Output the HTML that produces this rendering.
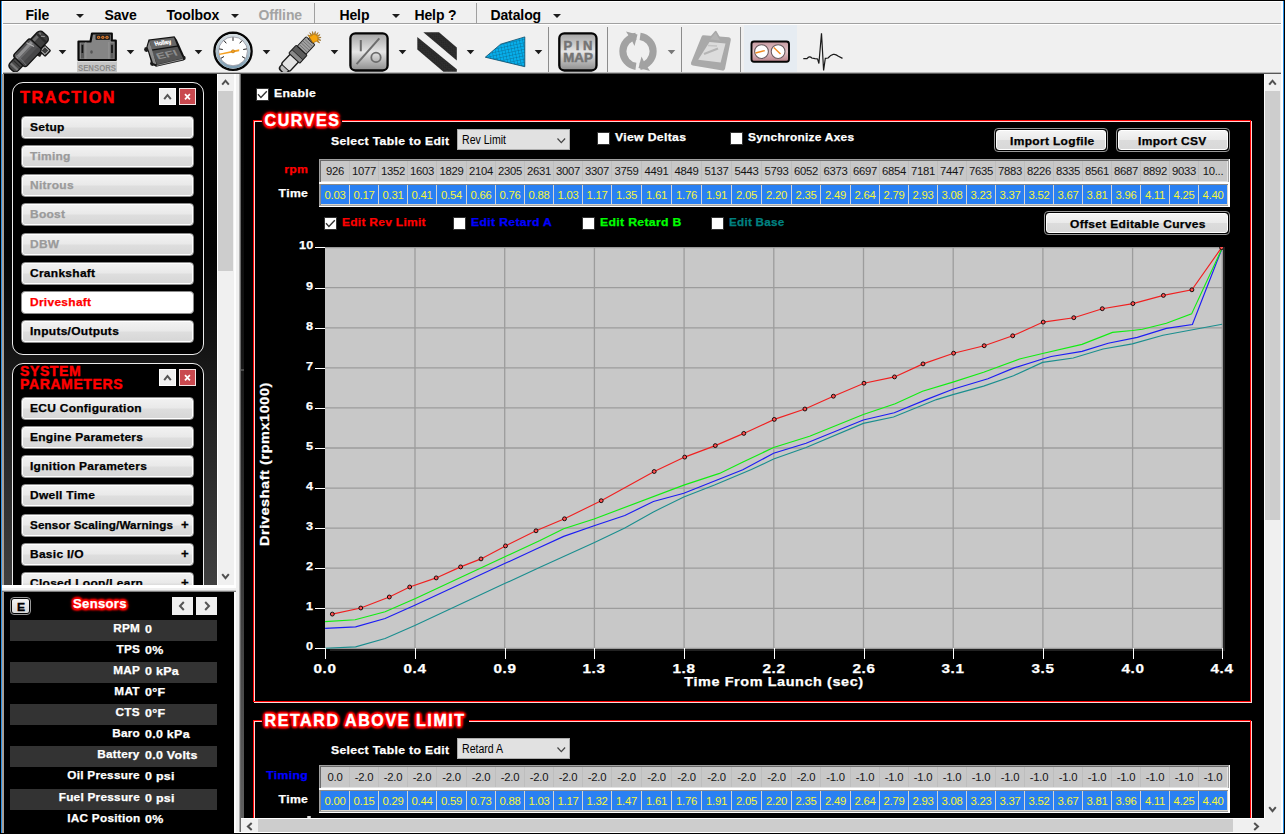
<!DOCTYPE html><html><head><meta charset="utf-8"><title>EFI</title><style>
*{box-sizing:border-box;margin:0;padding:0}
html,body{width:1285px;height:834px;overflow:hidden;background:#f0f0f0;font-family:"Liberation Sans",sans-serif;}
.a{position:absolute}
.b{font-weight:bold}
.t{position:absolute;white-space:nowrap;font-weight:bold;transform-origin:0 0;line-height:1;-webkit-text-stroke:0.25px currentColor}
.tri{position:absolute;width:0;height:0;border-left:4px solid transparent;border-right:4px solid transparent;border-top:4px solid #1c1c1c}
.btn{position:absolute;left:21px;width:173px;height:23px;border-radius:4px;border:1px solid #8c8c8c;box-shadow:inset 0 0 0 1px #fff;background:linear-gradient(#f2f2f2 0%,#e9e9e9 48%,#dedede 52%,#d6d6d6 100%)}
.btn.on{background:#fff}
.sq{position:absolute;width:17px;height:17px}
.glow{text-shadow:0 0 1px #f00,0 0 2px #f00,0 0 2px #f00,0 0 3px #f00,0 0 3px #f00,0 0 4px #f00,0 0 5px #f00,1.5px 1.5px 2px #f00,-1.5px -1.5px 2px #f00,1.5px -1.5px 2px #f00,-1.5px 1.5px 2px #f00,2px 0 2px #f00,-2px 0 2px #f00,0 2px 2px #f00,0 -2px 2px #f00}
.cb{position:absolute;width:13px;height:13px;background:#fff;border:1px solid #333}
.cell{position:absolute;top:0;height:100%;text-align:center;font-size:11.3px;white-space:nowrap;letter-spacing:-0.25px}
.pbtn{position:absolute;height:24px;border-radius:4px;border:1px solid #9a9a9a;background:#000;padding:1px}
.pbtn>div{width:100%;height:100%;border-radius:3px;border:1px solid #fff;background:linear-gradient(#f4f4f4 0%,#eaeaea 48%,#dcdcdc 52%,#d8d8d8 100%)}
.dd{position:absolute;height:21px;width:113px;background:#e1e1e1;border:1px solid #adadad}
.srow{position:absolute;left:10px;width:207px;height:21px;background:#333}
</style></head><body>
<div class="a" style="left:0px;top:0px;width:1285px;height:24px;background:#f0f0f0;"></div>
<div class="a" style="left:0px;top:23px;width:1285px;height:1px;background:#a0a0a0;"></div>
<div class="a" style="left:0px;top:24px;width:1285px;height:1px;background:#fff;"></div>
<div class="t " style="left:25.4px;top:8px;font-size:14px;color:#000;letter-spacing:-0.1px;transform:scaleX(1.0);-webkit-text-stroke:0">File</div>
<div class="t " style="left:104.4px;top:8px;font-size:14px;color:#000;letter-spacing:-0.1px;transform:scaleX(1.0);-webkit-text-stroke:0">Save</div>
<div class="t " style="left:166.4px;top:8px;font-size:14px;color:#000;letter-spacing:-0.1px;transform:scaleX(1.0);-webkit-text-stroke:0">Toolbox</div>
<div class="t " style="left:258.4px;top:8px;font-size:14px;color:#a3a3a3;letter-spacing:-0.1px;transform:scaleX(1.0);-webkit-text-stroke:0">Offline</div>
<div class="t " style="left:339.4px;top:8px;font-size:14px;color:#000;letter-spacing:-0.1px;transform:scaleX(1.0);-webkit-text-stroke:0">Help</div>
<div class="t " style="left:414.4px;top:8px;font-size:14px;color:#000;letter-spacing:-0.1px;transform:scaleX(1.0);-webkit-text-stroke:0">Help ?</div>
<div class="t " style="left:490.4px;top:8px;font-size:14px;color:#000;letter-spacing:-0.1px;transform:scaleX(1.0);-webkit-text-stroke:0">Datalog</div>
<div class="tri" style="left:75.5px;top:14px"></div>
<div class="tri" style="left:230.5px;top:14px"></div>
<div class="tri" style="left:391.5px;top:14px"></div>
<div class="tri" style="left:552.5px;top:14px"></div>
<div class="a" style="left:314px;top:3px;width:1px;height:20px;background:#a0a0a0;"></div>
<div class="a" style="left:476px;top:3px;width:1px;height:20px;background:#a0a0a0;"></div>
<div class="a" style="left:0px;top:25px;width:1285px;height:47px;background:#f0f0f0;"></div>
<svg class="a" style="left:0;top:24px" width="1285" height="49" viewBox="0 24 1285 49">
<defs>
<linearGradient id="gio" x1="0" y1="0" x2="0" y2="1"><stop offset="0" stop-color="#a4a4a4"/><stop offset="0.5" stop-color="#e6e6e6"/><stop offset="0.62" stop-color="#cfcfcf"/><stop offset="1" stop-color="#8c8c8c"/></linearGradient>
<linearGradient id="ginj" x1="0" y1="0" x2="1" y2="1"><stop offset="0" stop-color="#8a8a8a"/><stop offset="0.35" stop-color="#5a5a5a"/><stop offset="1" stop-color="#333"/></linearGradient>
<linearGradient id="gpk" x1="0" y1="0" x2="0" y2="1"><stop offset="0" stop-color="#c79aa0"/><stop offset="0.5" stop-color="#e2c4c8"/><stop offset="1" stop-color="#b88088"/></linearGradient>
<pattern id="grid" width="3.2" height="3.2" patternUnits="userSpaceOnUse" patternTransform="rotate(-12)"><rect width="3.2" height="3.2" fill="#07aeea"/><path d="M0 0H3.2M0 0V3.2" stroke="#0a5f86" stroke-width="0.7"/></pattern>
<linearGradient id="gring" x1="0" y1="0" x2="0" y2="1"><stop offset="0" stop-color="#d4dde2"/><stop offset="0.45" stop-color="#b4c6d0"/><stop offset="1" stop-color="#7f9fb4"/></linearGradient>
<pattern id="tex" width="3" height="3" patternUnits="userSpaceOnUse" patternTransform="rotate(40)"><rect width="3" height="3" fill="#262626"/><rect x="0.5" y="0.5" width="1" height="1" fill="#4a4a4a"/><rect x="2" y="1.8" width="0.8" height="0.8" fill="#3c3c3c"/></pattern>
</defs>
<path d="M58.7 50 H66.3 L62.5 54.2 Z" fill="#1c1c1c"/>
<path d="M126.7 50 H134.3 L130.5 54.2 Z" fill="#1c1c1c"/>
<path d="M194.7 50 H202.3 L198.5 54.2 Z" fill="#1c1c1c"/>
<path d="M262.7 50 H270.3 L266.5 54.2 Z" fill="#1c1c1c"/>
<path d="M330.7 50 H338.3 L334.5 54.2 Z" fill="#1c1c1c"/>
<path d="M398.7 50 H406.3 L402.5 54.2 Z" fill="#1c1c1c"/>
<path d="M466.7 50 H474.3 L470.5 54.2 Z" fill="#1c1c1c"/>
<path d="M534.7 50 H542.3 L538.5 54.2 Z" fill="#1c1c1c"/>
<path d="M667.7 50 H675.3 L671.5 54.2 Z" fill="#787878"/>
<line x1="548.5" y1="27" x2="548.5" y2="72" stroke="#8c8c8c" stroke-width="1"/>
<line x1="607.5" y1="27" x2="607.5" y2="72" stroke="#8c8c8c" stroke-width="1"/>
<line x1="681.5" y1="27" x2="681.5" y2="72" stroke="#8c8c8c" stroke-width="1"/>
<line x1="740.5" y1="27" x2="740.5" y2="72" stroke="#8c8c8c" stroke-width="1"/>
<g transform="translate(27.2,53.0) rotate(-46.5)">
<rect x="-23" y="-5.6" width="14" height="11.2" rx="4" fill="#4a4a4a" stroke="#141414" stroke-width="1.4"/>
<rect x="-20" y="-4.8" width="2.2" height="9.6" fill="#7a7a7a"/><rect x="-15.5" y="-4.8" width="1.2" height="9.6" fill="#2c2c2c"/>
<rect x="9" y="-6.9" width="17" height="13.8" rx="4.4" fill="#3e3e3e" stroke="#141414" stroke-width="1.4"/>
<rect x="11" y="-5.5" width="13" height="3" rx="1.5" fill="#6c6c6c"/>
<rect x="19.5" y="-6" width="2.4" height="12" fill="#2a2a2a"/>
<path d="M21.5 -1.5 L24 1.5" stroke="#9a9a9a" stroke-width="1"/>
<path d="M4 6 L11 6 L11 11 L6 12 Z" fill="#1e1c1c"/>
<rect x="9.4" y="6.8" width="9" height="9" rx="1.2" fill="#141414"/>
<rect x="11.2" y="8.4" width="5.6" height="5.6" fill="#3c3c3c" stroke="#e8e8e8" stroke-width="0.9"/>
<rect x="-12" y="-8.6" width="24.5" height="17.2" rx="3" fill="#525254" stroke="#141414" stroke-width="1.4"/>
<rect x="-11" y="-5.8" width="22" height="3.4" fill="#8e8e90"/>
<rect x="-11" y="-2.4" width="22" height="1.6" fill="#6a6a6c"/>
<rect x="-11.2" y="3.5" width="23" height="4.4" rx="1.5" fill="#454547"/>
<path d="M7 -7.6 L9.5 0.5" stroke="#b4b4b4" stroke-width="1"/>
<path d="M-9.5 -7.5 Q-8 0 -9.5 7.5" stroke="#77777a" stroke-width="0.9" fill="none"/>
</g>
<rect x="77" y="61.5" width="40" height="10.5" fill="#c6c6c6"/>
<text x="97" y="71" font-family="Liberation Sans" font-weight="bold" font-size="9.5" fill="#8a8a8a" text-anchor="middle" textLength="38" lengthAdjust="spacingAndGlyphs">SENSORS</text>
<path d="M78.5 41.5 H90.5 L92 33.5 H111.8 V40.5 H115.8 V60 H78.5 Z" fill="#858585" stroke="#0a0a0a" stroke-width="2.2" stroke-linejoin="round"/>
<rect x="95.5" y="34.5" width="14.5" height="5.5" rx="1" fill="#222"/>
<circle cx="98.6" cy="37.3" r="1.6" fill="#e07a2a"/><circle cx="98.6" cy="37.3" r="0.6" fill="#333"/>
<circle cx="102.8" cy="37.3" r="1.6" fill="#e07a2a"/><circle cx="102.8" cy="37.3" r="0.6" fill="#333"/>
<circle cx="107" cy="37.3" r="1.6" fill="#e07a2a"/><circle cx="107" cy="37.3" r="0.6" fill="#333"/>
<rect x="81" y="43.5" width="3" height="15" fill="#5a5a5a"/><rect x="81.6" y="45" width="1.6" height="8" fill="#111"/>
<rect x="110.5" y="43.5" width="3" height="15" fill="#5a5a5a"/><rect x="111.2" y="45" width="1.6" height="8" fill="#111"/>
<rect x="85.5" y="42" width="0.8" height="17" fill="#9a9a9a"/><rect x="108.5" y="42" width="0.8" height="17" fill="#9a9a9a"/>
<ellipse cx="91.5" cy="52" rx="1.3" ry="1.7" fill="#555"/>
<path d="M146.5 46.5 L148.5 39.5 L174.5 36.3 L177 40 L184.8 57.5 L183.5 60.5 L156 66.8 L151.5 64 Z" fill="#111"/>
<circle cx="146.5" cy="49.5" r="2.4" fill="#1a1a1a"/><circle cx="152.5" cy="63.5" r="2.4" fill="#1a1a1a"/><circle cx="183.5" cy="58" r="2.2" fill="#1a1a1a"/>
<path d="M149.5 40.5 L174 37.5 L177 45.5 L151.5 49.5 Z" fill="#666"/>
<path d="M151.8 50.8 L177.5 46.8 L183 58.2 L157 64.5 Z" fill="#555"/>
<path d="M147.5 47 L149.3 41 L156.5 64.5 L153 63 Z" fill="#8c8c8c"/>
<path d="M157 64.8 L183 58.6 L183 59.8 L156.5 66 Z" fill="#8a8a8a"/>
<text transform="translate(155.5,45.8) rotate(-8) skewX(14)" font-family="Liberation Sans" font-weight="bold" font-size="6" fill="#fff" stroke="#fff" stroke-width="0.3" textLength="16.5" lengthAdjust="spacingAndGlyphs">Holley</text>
<text transform="translate(158,59.6) rotate(-12) skewX(16)" font-family="Liberation Sans" font-weight="bold" font-size="9" fill="#8e8e8e" textLength="21" lengthAdjust="spacingAndGlyphs">EFI</text>
<circle cx="233" cy="51.3" r="18.6" fill="#fff" stroke="#050505" stroke-width="2.4"/>
<circle cx="233" cy="51.3" r="15.9" fill="none" stroke="url(#gring)" stroke-width="2.6"/>
<circle cx="233" cy="51.3" r="14.4" fill="none" stroke="#556" stroke-width="0.5"/>
<line x1="224.0" y1="56.5" x2="220.9" y2="58.3" stroke="#222" stroke-width="1"/>
<line x1="222.8" y1="49.5" x2="219.2" y2="48.9" stroke="#222" stroke-width="1"/>
<line x1="226.3" y1="43.3" x2="224.0" y2="40.6" stroke="#222" stroke-width="1"/>
<line x1="233.0" y1="40.9" x2="233.0" y2="37.3" stroke="#222" stroke-width="1"/>
<line x1="239.7" y1="43.3" x2="242.0" y2="40.6" stroke="#222" stroke-width="1"/>
<line x1="243.2" y1="49.5" x2="246.8" y2="48.9" stroke="#222" stroke-width="1"/>
<line x1="242.0" y1="56.5" x2="245.1" y2="58.3" stroke="#222" stroke-width="1"/>
<path d="M219 53.8 L239.2 49.2 L239.2 51.2 L219.4 55 Z" fill="#f5a020"/>
<circle cx="233" cy="51.3" r="1.6" fill="#f5a020" stroke="#a86a10" stroke-width="0.5"/>
<g transform="translate(300,52) rotate(-47)">
<rect x="-27.5" y="-5.4" width="14" height="10.8" rx="3.8" fill="#1c1c1c"/>
<rect x="-26" y="-4" width="12" height="8" rx="3" fill="#bdbdbd"/>
<rect x="-22" y="-6.4" width="15" height="12.8" rx="2" fill="#1c1c1c"/>
<rect x="-21" y="-5" width="13.5" height="10" rx="1.5" fill="#e4e4e4"/>
<rect x="-9" y="-8" width="12" height="16" rx="1.5" fill="#1a1a1a"/>
<rect x="-8" y="-7" width="4" height="14" fill="#8a8a8a"/><rect x="-3.5" y="-7" width="5.5" height="14" fill="#5c5c5c"/>
<rect x="2" y="-6.5" width="14" height="13" rx="1.5" fill="#1a1a1a"/>
<rect x="3" y="-5.5" width="12" height="11" fill="#a0a0a0"/>
<path d="M5 -5.5V5.5M7.5 -5.5V5.5M10 -5.5V5.5M12.5 -5.5V5.5" stroke="#6a6a6a" stroke-width="0.8"/>
<rect x="15" y="-3" width="5" height="6" fill="#666" stroke="#222" stroke-width="0.8"/>
</g>
<polygon points="307.8,34.9 311.3,36.1 309.7,32.7 312.5,35.2 312.4,31.5 313.9,34.9 315.3,31.4 315.4,35.2 318.0,32.5 316.6,36.0 320.1,34.6 317.4,37.2 321.1,37.4 317.6,38.7 321.0,40.3 317.2,40.1 319.7,43.0 316.3,41.3 313.0,43.0" fill="#f6a60e" stroke="#7a4a00" stroke-width="0.5"/>
<rect x="350.4" y="33.3" width="37.2" height="37.2" rx="5" fill="url(#gio)" stroke="#050505" stroke-width="2.3"/>
<line x1="360.8" y1="40" x2="360.8" y2="51.3" stroke="#6c6c6c" stroke-width="2"/>
<line x1="379.3" y1="38.4" x2="356.6" y2="64.2" stroke="#6c6c6c" stroke-width="2"/>
<circle cx="376" cy="57.4" r="4.7" fill="none" stroke="#6c6c6c" stroke-width="1.8"/>
<polygon points="423.3,32.2 439,32.2 456.8,47.4 456.8,60.5" fill="url(#tex)"/>
<polygon points="417.3,36.9 456.8,69.2 456.8,71.8 443.4,71.8 417.3,49.6" fill="url(#tex)"/>
<polygon points="485.3,57.2 500.6,44.2 524.8,36.9 524.8,66.7" fill="url(#grid)" stroke="#0a4a68" stroke-width="0.8"/>
<rect x="559.3" y="33.3" width="37.2" height="37.2" rx="5" fill="url(#gio)" stroke="#050505" stroke-width="2.3"/>
<text x="578" y="50.2" font-family="Liberation Sans" font-weight="bold" font-size="13" fill="#747474" stroke="#747474" stroke-width="0.5" text-anchor="middle" textLength="29" lengthAdjust="spacing">PIN</text>
<text x="578" y="61.7" font-family="Liberation Sans" font-weight="bold" font-size="12.5" fill="#747474" stroke="#747474" stroke-width="0.5" text-anchor="middle" textLength="29.5" lengthAdjust="spacingAndGlyphs">MAP</text>
<path d="M640.6 32.7 A18.8 18.8 0 0 1 640.6 69.9 L639.6 62.7 A11.5 11.5 0 0 0 639.6 39.9 Z" fill="#a2a2a2"/>
<path d="M635.4 69.9 A18.8 18.8 0 0 1 635.4 32.7 L636.4 39.9 A11.5 11.5 0 0 0 636.4 62.7 Z" fill="#a2a2a2"/>
<path d="M626 31.5 L637.5 34.5 L634.5 46 L631.8 40.5 Z" fill="#a2a2a2"/>
<path d="M650 71 L638.5 68 L641.5 56.5 L644.2 62 Z" fill="#a2a2a2"/>
<polygon points="703.6,37.6 728.6,39.6 722.8,68.4 693.2,63.4" fill="#a9a9a9" stroke="#a9a9a9" stroke-width="4.5" stroke-linejoin="round"/>
<polygon points="709.5,42 725.5,43.6 720.6,62.5 698.2,59.7" fill="#dcdcdc"/>
<polygon points="715.7,31.5 721.5,41.5 708.5,40" fill="#b4b4b4" stroke="#a9a9a9" stroke-width="1.5" stroke-linejoin="round"/>
<path d="M704 54 L718 48.5" stroke="#b5b5b5" stroke-width="2"/><path d="M708 45.5 L717 46" stroke="#c4c4c4" stroke-width="1.5"/>
<rect x="744" y="25" width="53" height="47" fill="#e6ecf2"/>
<rect x="751.5" y="41.5" width="37.5" height="20.3" rx="2.5" fill="url(#gpk)" stroke="#050505" stroke-width="1.9"/>
<circle cx="761.5" cy="51.6" r="6.9" fill="#fff" stroke="#6a5a5e" stroke-width="1.1"/>
<circle cx="778.1" cy="51.6" r="6.9" fill="#fff" stroke="#6a5a5e" stroke-width="1.1"/>
<path d="M755.5 53 L764.8 50.6" stroke="#f08a20" stroke-width="1.4"/>
<path d="M773.8 47.6 L780.5 54" stroke="#f08a20" stroke-width="1.4"/>
<path d="M803.3 58.6 L807 58.6 Q809.5 55.4 811.8 58 L815 58.6 L817.6 59 L818.9 63.5 L821.5 33.2 L823.6 70.5 L825.3 58.3 L828 58 Q833.5 51.8 838 56 L842.5 58.4" fill="none" stroke="#1a1a1a" stroke-width="1.2" stroke-linejoin="miter"/>
</svg>
<div class="a" style="left:2px;top:72px;width:1280px;height:1px;background:#b8b8b8;"></div>
<div class="a" style="left:2px;top:73px;width:1280px;height:1px;background:#585858;"></div>
<div class="a" style="left:4px;top:74px;width:213px;height:511px;background:linear-gradient(#000 0%,#030303 35%,#404040 100%);"></div>
<div class="a" style="left:2px;top:74px;width:2px;height:760px;background:#a8a098;"></div>
<div class="a" style="left:12px;top:82px;width:192px;height:273px;border:1px solid #ececec;border-radius:11px;background:#000"></div>
<div class="t " style="left:20px;top:89px;font-size:16.2px;color:#f00;letter-spacing:1.55px;transform:scaleX(1.0);-webkit-text-stroke:0.5px #f00">TRACTION</div>
<div class="sq" style="left:159px;top:88px;background:#f0f0f0;border:1px solid #fff"><svg class="a" style="left:-1px;top:-1px" width="17" height="17"><path d="M5.2 11.2 L8.5 7 L11.8 11.2" fill="none" stroke="#555" stroke-width="2"/></svg></div>
<div class="sq" style="left:179px;top:88px;background:#c9494f;border:1px solid #f4e4e4"><svg class="a" style="left:-1px;top:-1px" width="17" height="17"><path d="M6 6.2 L10.9 11.4 M10.9 6.2 L6 11.4" fill="none" stroke="#fff" stroke-width="1.7"/></svg></div>
<div class="btn " style="top:116px"></div>
<div class="t " style="left:30px;top:122px;font-size:10.6px;color:#000;letter-spacing:0.25px;transform:scaleX(1.13);">Setup</div>
<div class="btn " style="top:145px"></div>
<div class="t " style="left:30px;top:151px;font-size:10.6px;color:#9a9a9a;letter-spacing:0.25px;transform:scaleX(1.13);">Timing</div>
<div class="btn " style="top:174px"></div>
<div class="t " style="left:30px;top:180px;font-size:10.6px;color:#9a9a9a;letter-spacing:0.25px;transform:scaleX(1.13);">Nitrous</div>
<div class="btn " style="top:203px"></div>
<div class="t " style="left:30px;top:209px;font-size:10.6px;color:#9a9a9a;letter-spacing:0.25px;transform:scaleX(1.13);">Boost</div>
<div class="btn " style="top:233px"></div>
<div class="t " style="left:30px;top:239px;font-size:10.6px;color:#9a9a9a;letter-spacing:0.25px;transform:scaleX(1.13);">DBW</div>
<div class="btn " style="top:262px"></div>
<div class="t " style="left:30px;top:268px;font-size:10.6px;color:#000;letter-spacing:0.25px;transform:scaleX(1.13);">Crankshaft</div>
<div class="btn on" style="top:291px"></div>
<div class="t " style="left:30px;top:297px;font-size:10.6px;color:#f00;letter-spacing:0.25px;transform:scaleX(1.13);">Driveshaft</div>
<div class="btn " style="top:320px"></div>
<div class="t " style="left:30px;top:326px;font-size:10.6px;color:#000;letter-spacing:0.25px;transform:scaleX(1.13);">Inputs/Outputs</div>
<div class="a" style="left:12px;top:363px;width:192px;height:240px;border:1px solid #ececec;border-radius:11px;background:#000"></div>
<div class="t " style="left:20px;top:363.5px;font-size:14px;color:#f00;letter-spacing:0.62px;transform:scaleX(1.0);-webkit-text-stroke:0.45px #f00">SYSTEM</div>
<div class="t " style="left:20px;top:377px;font-size:14px;color:#f00;letter-spacing:0.62px;transform:scaleX(1.0);-webkit-text-stroke:0.45px #f00">PARAMETERS</div>
<div class="sq" style="left:159px;top:369px;background:#f0f0f0;border:1px solid #fff"><svg class="a" style="left:-1px;top:-1px" width="17" height="17"><path d="M5.2 11.2 L8.5 7 L11.8 11.2" fill="none" stroke="#555" stroke-width="2"/></svg></div>
<div class="sq" style="left:179px;top:369px;background:#c9494f;border:1px solid #f4e4e4"><svg class="a" style="left:-1px;top:-1px" width="17" height="17"><path d="M6 6.2 L10.9 11.4 M10.9 6.2 L6 11.4" fill="none" stroke="#fff" stroke-width="1.7"/></svg></div>
<div class="btn" style="top:397px"></div>
<div class="t " style="left:30px;top:403px;font-size:10.6px;color:#000;letter-spacing:0.25px;transform:scaleX(1.13);">ECU Configuration</div>
<div class="btn" style="top:426px"></div>
<div class="t " style="left:30px;top:432px;font-size:10.6px;color:#000;letter-spacing:0.25px;transform:scaleX(1.13);">Engine Parameters</div>
<div class="btn" style="top:455px"></div>
<div class="t " style="left:30px;top:461px;font-size:10.6px;color:#000;letter-spacing:0.25px;transform:scaleX(1.13);">Ignition Parameters</div>
<div class="btn" style="top:484px"></div>
<div class="t " style="left:30px;top:490px;font-size:10.6px;color:#000;letter-spacing:0.25px;transform:scaleX(1.13);">Dwell Time</div>
<div class="btn" style="top:514px"></div>
<div class="t " style="left:30px;top:520px;font-size:10.6px;color:#000;letter-spacing:0.12px;transform:scaleX(1.1);">Sensor Scaling/Warnings</div>
<div class="t " style="left:181px;top:519px;font-size:12px;color:#000;letter-spacing:0px;transform:scaleX(1.1);">+</div>
<div class="btn" style="top:543px"></div>
<div class="t " style="left:30px;top:549px;font-size:10.6px;color:#000;letter-spacing:0.25px;transform:scaleX(1.13);">Basic I/O</div>
<div class="t " style="left:181px;top:548px;font-size:12px;color:#000;letter-spacing:0px;transform:scaleX(1.1);">+</div>
<div class="btn" style="top:572px"></div>
<div class="t " style="left:30px;top:578px;font-size:10.6px;color:#000;letter-spacing:0.25px;transform:scaleX(1.13);">Closed Loop/Learn</div>
<div class="t " style="left:181px;top:577px;font-size:12px;color:#000;letter-spacing:0px;transform:scaleX(1.1);">+</div>
<div class="a" style="left:217px;top:74px;width:1px;height:511px;background:#fff;"></div>
<div class="a" style="left:218px;top:74px;width:16px;height:511px;background:#f0f0f0;"></div>
<div class="a" style="left:218px;top:91px;width:15px;height:180px;background:#cdcdcd;"></div>
<svg class="a" style="left:217px;top:74px" width="17" height="17"><path d="M5.2 10.7 L8.5 6.7 L11.8 10.7" fill="none" stroke="#505050" stroke-width="2"/></svg>
<svg class="a" style="left:217px;top:568px" width="17" height="17"><path d="M5.2 6.2 L8.5 10.2 L11.8 6.2" fill="none" stroke="#505050" stroke-width="2"/></svg>
<div class="a" style="left:234px;top:74px;width:2px;height:760px;background:#fdfdfd;"></div>
<div class="a" style="left:236px;top:74px;width:3px;height:760px;background:#f0f0f0;"></div>
<div class="a" style="left:239px;top:74px;width:1px;height:760px;background:#b0b0b0;"></div>
<div class="a" style="left:240px;top:74px;width:1px;height:760px;background:#6a6a6a;"></div>
<div class="a" style="left:241px;top:74px;width:3px;height:744px;background:linear-gradient(#000 0%,#161616 38%,#606060 100%);"></div>
<div class="a" style="left:241px;top:369px;width:3px;height:2px;background:#4a4a4a;"></div>
<div class="a" style="left:2px;top:585px;width:234px;height:7px;background:linear-gradient(#fff 0,#fff 3px,#f0f0f0 3px,#f0f0f0 5px,#a8a8a8 6px,#505050 7px);"></div>
<div class="a" style="left:4px;top:592px;width:230px;height:242px;background:#000;"></div>
<div class="a" style="left:10px;top:597px;width:21px;height:18px;border:1px solid #999;border-radius:4px;background:#000"></div>
<div class="a" style="left:12px;top:599px;width:17px;height:14px;border-radius:2px;background:linear-gradient(#f4f4f4,#d8d8d8)"></div>
<div class="t " style="left:16.5px;top:602px;font-size:10.6px;color:#000;letter-spacing:0px;transform:scaleX(1.15);-webkit-text-stroke:0.3px #000">E</div>
<div class="t glow" style="left:73px;top:598px;font-size:12.6px;color:#fff;letter-spacing:0.3px;transform:scaleX(1.04);">Sensors</div>
<div class="a" style="left:172px;top:597px;width:21px;height:18px;background:#f0f0f0"><svg width="21" height="18"><path d="M11.8 5 L8 9 L11.8 13" fill="none" stroke="#555" stroke-width="2"/></svg></div>
<div class="a" style="left:196px;top:597px;width:21px;height:18px;background:#f0f0f0"><svg width="21" height="18"><path d="M9.2 5 L13 9 L9.2 13" fill="none" stroke="#555" stroke-width="2"/></svg></div>
<div class="srow" style="top:620px"></div>
<div class="t " style="right:1145px;top:623px;font-size:11px;color:#fff;letter-spacing:0.25px;transform-origin:100% 0;transform:scaleX(1.07);">RPM</div>
<div class="t " style="left:145px;top:624px;font-size:11px;color:#fff;letter-spacing:0.25px;transform:scaleX(1.13);">0</div>
<div class="t " style="right:1145px;top:644px;font-size:11px;color:#fff;letter-spacing:0.25px;transform-origin:100% 0;transform:scaleX(1.07);">TPS</div>
<div class="t " style="left:145px;top:645px;font-size:11px;color:#fff;letter-spacing:0.25px;transform:scaleX(1.13);">0%</div>
<div class="srow" style="top:662px"></div>
<div class="t " style="right:1145px;top:665px;font-size:11px;color:#fff;letter-spacing:0.25px;transform-origin:100% 0;transform:scaleX(1.07);">MAP</div>
<div class="t " style="left:145px;top:666px;font-size:11px;color:#fff;letter-spacing:0.25px;transform:scaleX(1.13);">0 kPa</div>
<div class="t " style="right:1145px;top:686px;font-size:11px;color:#fff;letter-spacing:0.25px;transform-origin:100% 0;transform:scaleX(1.07);">MAT</div>
<div class="t " style="left:145px;top:687px;font-size:11px;color:#fff;letter-spacing:0.25px;transform:scaleX(1.13);">0&deg;F</div>
<div class="srow" style="top:704px"></div>
<div class="t " style="right:1145px;top:707px;font-size:11px;color:#fff;letter-spacing:0.25px;transform-origin:100% 0;transform:scaleX(1.07);">CTS</div>
<div class="t " style="left:145px;top:708px;font-size:11px;color:#fff;letter-spacing:0.25px;transform:scaleX(1.13);">0&deg;F</div>
<div class="t " style="right:1145px;top:728px;font-size:11px;color:#fff;letter-spacing:0.25px;transform-origin:100% 0;transform:scaleX(1.07);">Baro</div>
<div class="t " style="left:145px;top:729px;font-size:11px;color:#fff;letter-spacing:0.25px;transform:scaleX(1.13);">0.0 kPa</div>
<div class="srow" style="top:746px"></div>
<div class="t " style="right:1145px;top:749px;font-size:11px;color:#fff;letter-spacing:0.25px;transform-origin:100% 0;transform:scaleX(1.07);">Battery</div>
<div class="t " style="left:145px;top:750px;font-size:11px;color:#fff;letter-spacing:0.25px;transform:scaleX(1.13);">0.0 Volts</div>
<div class="t " style="right:1145px;top:770px;font-size:11px;color:#fff;letter-spacing:0.25px;transform-origin:100% 0;transform:scaleX(1.07);">Oil Pressure</div>
<div class="t " style="left:145px;top:771px;font-size:11px;color:#fff;letter-spacing:0.25px;transform:scaleX(1.13);">0 psi</div>
<div class="srow" style="top:789px"></div>
<div class="t " style="right:1145px;top:792px;font-size:11px;color:#fff;letter-spacing:0.25px;transform-origin:100% 0;transform:scaleX(1.07);">Fuel Pressure</div>
<div class="t " style="left:145px;top:793px;font-size:11px;color:#fff;letter-spacing:0.25px;transform:scaleX(1.13);">0 psi</div>
<div class="t " style="right:1145px;top:813px;font-size:11px;color:#fff;letter-spacing:0.25px;transform-origin:100% 0;transform:scaleX(1.07);">IAC Position</div>
<div class="t " style="left:145px;top:814px;font-size:11px;color:#fff;letter-spacing:0.25px;transform:scaleX(1.13);">0%</div>
<div class="a" style="left:244px;top:74px;width:1020px;height:744px;background:#000;overflow:hidden" id="main">
<div class="cb" style="left:12px;top:14px"><svg class="a" style="left:0;top:0" width="11" height="11"><path d="M1.0 5.3 L3.9 8.4 L9.8 2.2" fill="none" stroke="#333" stroke-width="1.35"/></svg></div>
<div class="t " style="left:30px;top:13.700000000000003px;font-size:10.8px;color:#fff;letter-spacing:0.3px;transform:scaleX(1.13);">Enable</div>
<div class="a" style="left:10px;top:47px;width:998px;height:582px;border:1px solid #ffd6d6"></div>
<div class="a" style="left:9px;top:46px;width:998px;height:582px;border:1px solid #f00"></div>
<div class="a" style="left:18px;top:45px;width:80px;height:4px;background:#000;"></div>
<div class="t glow" style="left:20.5px;top:38.5px;font-size:16px;color:#fff;letter-spacing:1.6px;transform:scaleX(1.0);-webkit-text-stroke:0.4px #fff">CURVES</div>
<div class="t " style="left:87px;top:62px;font-size:10.8px;color:#fff;letter-spacing:0.3px;transform:scaleX(1.13);">Select Table to Edit</div>
<div class="dd" style="left:213px;top:55px"><svg class="a" style="left:98px;top:7px" width="11" height="8"><path d="M1.5 1.5 L5.3 5.6 L9.1 1.5" fill="none" stroke="#444" stroke-width="1.2"/></svg></div>
<div class="a" style="left:217.60000000000002px;top:58.900000000000006px;font-size:12px;line-height:14px;color:#000;white-space:nowrap;transform-origin:0 0;transform:scaleX(0.88)">Rev Limit</div>
<div class="cb" style="left:353px;top:58px"></div>
<div class="t " style="left:371px;top:58px;font-size:10.8px;color:#fff;letter-spacing:0.3px;transform:scaleX(1.13);">View Deltas</div>
<div class="cb" style="left:486px;top:58px"></div>
<div class="t " style="left:504px;top:58px;font-size:10.8px;color:#fff;letter-spacing:0.25px;transform:scaleX(1.1);">Synchronize Axes</div>
<div class="pbtn" style="left:750px;top:54px;width:114px"><div></div></div>
<div class="t " style="left:765.5px;top:62px;font-size:10.8px;color:#000;letter-spacing:0.3px;transform:scaleX(1.11);">Import Logfile</div>
<div class="pbtn" style="left:872px;top:54px;width:114px"><div></div></div>
<div class="t " style="left:894px;top:62px;font-size:10.8px;color:#000;letter-spacing:0.3px;transform:scaleX(1.11);">Import CSV</div>
<div class="a" style="left:75px;top:85px;width:911px;height:48px;background:#fff;"></div>
<div class="a" style="left:75px;top:85px;width:910px;height:23px;background:#a0a0a0;"></div>
<div class="a" style="left:76px;top:86px;width:908px;height:22px;background:#696969;"></div>
<div class="a" style="left:77px;top:87px;width:907px;height:21px;background:#e3e3e3;"></div>
<div class="a" style="left:77px;top:87px;width:906px;height:20px;background:#c8c8c8;"></div>
<div class="a" style="left:75px;top:108px;width:911px;height:2px;background:#fff;"></div>
<div class="a" style="left:75px;top:110px;width:909px;height:22px;background:#a0a0a0;"></div>
<div class="a" style="left:76px;top:110px;width:908px;height:21px;background:#8a8a8a;"></div>
<div class="a" style="left:77px;top:111px;width:907px;height:20px;background:#d8d4cc;"></div>
<div class="a" style="left:77px;top:87px;width:906px;height:20px;color:#151515;overflow:hidden">
<div class="cell" style="left:0px;width:28px;line-height:21px;">926</div>
<div class="cell" style="left:28px;width:29px;line-height:21px;border-left:1px solid #bebebe">1077</div>
<div class="cell" style="left:57px;width:29px;line-height:21px;border-left:1px solid #bebebe">1352</div>
<div class="cell" style="left:86px;width:29px;line-height:21px;border-left:1px solid #bebebe">1603</div>
<div class="cell" style="left:115px;width:30px;line-height:21px;border-left:1px solid #bebebe">1829</div>
<div class="cell" style="left:145px;width:29px;line-height:21px;border-left:1px solid #bebebe">2104</div>
<div class="cell" style="left:174px;width:29px;line-height:21px;border-left:1px solid #bebebe">2305</div>
<div class="cell" style="left:203px;width:29px;line-height:21px;border-left:1px solid #bebebe">2631</div>
<div class="cell" style="left:232px;width:29px;line-height:21px;border-left:1px solid #bebebe">3007</div>
<div class="cell" style="left:261px;width:29px;line-height:21px;border-left:1px solid #bebebe">3307</div>
<div class="cell" style="left:290px;width:30px;line-height:21px;border-left:1px solid #bebebe">3759</div>
<div class="cell" style="left:320px;width:30px;line-height:21px;border-left:1px solid #bebebe">4491</div>
<div class="cell" style="left:350px;width:30px;line-height:21px;border-left:1px solid #bebebe">4849</div>
<div class="cell" style="left:380px;width:30px;line-height:21px;border-left:1px solid #bebebe">5137</div>
<div class="cell" style="left:410px;width:30px;line-height:21px;border-left:1px solid #bebebe">5443</div>
<div class="cell" style="left:440px;width:30px;line-height:21px;border-left:1px solid #bebebe">5793</div>
<div class="cell" style="left:470px;width:29px;line-height:21px;border-left:1px solid #bebebe">6052</div>
<div class="cell" style="left:499px;width:30px;line-height:21px;border-left:1px solid #bebebe">6373</div>
<div class="cell" style="left:529px;width:29px;line-height:21px;border-left:1px solid #bebebe">6697</div>
<div class="cell" style="left:558px;width:29px;line-height:21px;border-left:1px solid #bebebe">6854</div>
<div class="cell" style="left:587px;width:29px;line-height:21px;border-left:1px solid #bebebe">7181</div>
<div class="cell" style="left:616px;width:29px;line-height:21px;border-left:1px solid #bebebe">7447</div>
<div class="cell" style="left:645px;width:29px;line-height:21px;border-left:1px solid #bebebe">7635</div>
<div class="cell" style="left:674px;width:29px;line-height:21px;border-left:1px solid #bebebe">7883</div>
<div class="cell" style="left:703px;width:29px;line-height:21px;border-left:1px solid #bebebe">8226</div>
<div class="cell" style="left:732px;width:29px;line-height:21px;border-left:1px solid #bebebe">8335</div>
<div class="cell" style="left:761px;width:29px;line-height:21px;border-left:1px solid #bebebe">8561</div>
<div class="cell" style="left:790px;width:29px;line-height:21px;border-left:1px solid #bebebe">8687</div>
<div class="cell" style="left:819px;width:29px;line-height:21px;border-left:1px solid #bebebe">8892</div>
<div class="cell" style="left:848px;width:29px;line-height:21px;border-left:1px solid #bebebe">9033</div>
<div class="cell" style="left:877px;width:29px;line-height:21px;border-left:1px solid #bebebe">10...</div>
</div>
<div class="a" style="left:77px;top:111px;width:906px;height:19px;background:#2a80f2;color:#f6f63a;overflow:hidden">
<div class="cell" style="left:0px;width:28px;line-height:20px;">0.03</div>
<div class="cell" style="left:28px;width:29px;line-height:20px;border-left:1px solid #d4d4d4">0.17</div>
<div class="cell" style="left:57px;width:29px;line-height:20px;border-left:1px solid #d4d4d4">0.31</div>
<div class="cell" style="left:86px;width:29px;line-height:20px;border-left:1px solid #d4d4d4">0.41</div>
<div class="cell" style="left:115px;width:30px;line-height:20px;border-left:1px solid #d4d4d4">0.54</div>
<div class="cell" style="left:145px;width:29px;line-height:20px;border-left:1px solid #d4d4d4">0.66</div>
<div class="cell" style="left:174px;width:29px;line-height:20px;border-left:1px solid #d4d4d4">0.76</div>
<div class="cell" style="left:203px;width:29px;line-height:20px;border-left:1px solid #d4d4d4">0.88</div>
<div class="cell" style="left:232px;width:29px;line-height:20px;border-left:1px solid #d4d4d4">1.03</div>
<div class="cell" style="left:261px;width:29px;line-height:20px;border-left:1px solid #d4d4d4">1.17</div>
<div class="cell" style="left:290px;width:30px;line-height:20px;border-left:1px solid #d4d4d4">1.35</div>
<div class="cell" style="left:320px;width:30px;line-height:20px;border-left:1px solid #d4d4d4">1.61</div>
<div class="cell" style="left:350px;width:30px;line-height:20px;border-left:1px solid #d4d4d4">1.76</div>
<div class="cell" style="left:380px;width:30px;line-height:20px;border-left:1px solid #d4d4d4">1.91</div>
<div class="cell" style="left:410px;width:30px;line-height:20px;border-left:1px solid #d4d4d4">2.05</div>
<div class="cell" style="left:440px;width:30px;line-height:20px;border-left:1px solid #d4d4d4">2.20</div>
<div class="cell" style="left:470px;width:29px;line-height:20px;border-left:1px solid #d4d4d4">2.35</div>
<div class="cell" style="left:499px;width:30px;line-height:20px;border-left:1px solid #d4d4d4">2.49</div>
<div class="cell" style="left:529px;width:29px;line-height:20px;border-left:1px solid #d4d4d4">2.64</div>
<div class="cell" style="left:558px;width:29px;line-height:20px;border-left:1px solid #d4d4d4">2.79</div>
<div class="cell" style="left:587px;width:29px;line-height:20px;border-left:1px solid #d4d4d4">2.93</div>
<div class="cell" style="left:616px;width:29px;line-height:20px;border-left:1px solid #d4d4d4">3.08</div>
<div class="cell" style="left:645px;width:29px;line-height:20px;border-left:1px solid #d4d4d4">3.23</div>
<div class="cell" style="left:674px;width:29px;line-height:20px;border-left:1px solid #d4d4d4">3.37</div>
<div class="cell" style="left:703px;width:29px;line-height:20px;border-left:1px solid #d4d4d4">3.52</div>
<div class="cell" style="left:732px;width:29px;line-height:20px;border-left:1px solid #d4d4d4">3.67</div>
<div class="cell" style="left:761px;width:29px;line-height:20px;border-left:1px solid #d4d4d4">3.81</div>
<div class="cell" style="left:790px;width:29px;line-height:20px;border-left:1px solid #d4d4d4">3.96</div>
<div class="cell" style="left:819px;width:29px;line-height:20px;border-left:1px solid #d4d4d4">4.11</div>
<div class="cell" style="left:848px;width:29px;line-height:20px;border-left:1px solid #d4d4d4">4.25</div>
<div class="cell" style="left:877px;width:29px;line-height:20px;border-left:1px solid #d4d4d4">4.40</div>
</div>
<div class="t" style="right:956px;top:90px;font-size:10.8px;color:#f00;letter-spacing:0.3px;transform-origin:100% 0;transform:scaleX(1.13)">rpm</div>
<div class="t" style="right:956px;top:114px;font-size:10.8px;color:#fff;letter-spacing:0.3px;transform-origin:100% 0;transform:scaleX(1.13)">Time</div>
<div class="cb" style="left:80px;top:143px"><svg class="a" style="left:0;top:0" width="11" height="11"><path d="M1.0 5.3 L3.9 8.4 L9.8 2.2" fill="none" stroke="#333" stroke-width="1.35"/></svg></div>
<div class="t " style="left:98.30000000000001px;top:143px;font-size:10.8px;color:#f00;letter-spacing:0.25px;transform:scaleX(1.11);">Edit Rev Limit</div>
<div class="cb" style="left:209px;top:143px"></div>
<div class="t " style="left:226.7px;top:143px;font-size:10.8px;color:#00f;letter-spacing:0.3px;transform:scaleX(1.13);">Edit Retard A</div>
<div class="cb" style="left:338px;top:143px"></div>
<div class="t " style="left:356.20000000000005px;top:143px;font-size:10.8px;color:#0f0;letter-spacing:0.3px;transform:scaleX(1.13);">Edit Retard B</div>
<div class="cb" style="left:467px;top:143px"></div>
<div class="t " style="left:484.9px;top:143px;font-size:10.8px;color:#008080;letter-spacing:0.25px;transform:scaleX(1.08);">Edit Base</div>
<div class="pbtn" style="left:800px;top:137px;width:186px"><div></div></div>
<div class="t " style="left:825.5px;top:145px;font-size:10.8px;color:#000;letter-spacing:0.3px;transform:scaleX(1.11);">Offset Editable Curves</div>
<div class="a" style="left:81px;top:173px;width:898px;height:402px;background:#c8c8c8;overflow:hidden">
<svg class="a" style="left:0;top:0" width="898" height="402">
<line x1="90.0" y1="0" x2="90.0" y2="402" stroke="#9c9c9c" stroke-width="1.3"/>
<line x1="179.7" y1="0" x2="179.7" y2="402" stroke="#9c9c9c" stroke-width="1.3"/>
<line x1="269.4" y1="0" x2="269.4" y2="402" stroke="#9c9c9c" stroke-width="1.3"/>
<line x1="359.1" y1="0" x2="359.1" y2="402" stroke="#9c9c9c" stroke-width="1.3"/>
<line x1="448.8" y1="0" x2="448.8" y2="402" stroke="#9c9c9c" stroke-width="1.3"/>
<line x1="538.5" y1="0" x2="538.5" y2="402" stroke="#9c9c9c" stroke-width="1.3"/>
<line x1="628.2" y1="0" x2="628.2" y2="402" stroke="#9c9c9c" stroke-width="1.3"/>
<line x1="717.9" y1="0" x2="717.9" y2="402" stroke="#9c9c9c" stroke-width="1.3"/>
<line x1="807.6" y1="0" x2="807.6" y2="402" stroke="#9c9c9c" stroke-width="1.3"/>
<line x1="897.3" y1="0" x2="897.3" y2="402" stroke="#9c9c9c" stroke-width="1.3"/>
<line x1="0" y1="0.6" x2="898" y2="0.6" stroke="#9c9c9c" stroke-width="1.3"/>
<line x1="0" y1="40.7" x2="898" y2="40.7" stroke="#9c9c9c" stroke-width="1.3"/>
<line x1="0" y1="80.8" x2="898" y2="80.8" stroke="#9c9c9c" stroke-width="1.3"/>
<line x1="0" y1="120.8" x2="898" y2="120.8" stroke="#9c9c9c" stroke-width="1.3"/>
<line x1="0" y1="160.9" x2="898" y2="160.9" stroke="#9c9c9c" stroke-width="1.3"/>
<line x1="0" y1="201.0" x2="898" y2="201.0" stroke="#9c9c9c" stroke-width="1.3"/>
<line x1="0" y1="241.1" x2="898" y2="241.1" stroke="#9c9c9c" stroke-width="1.3"/>
<line x1="0" y1="281.2" x2="898" y2="281.2" stroke="#9c9c9c" stroke-width="1.3"/>
<line x1="0" y1="321.2" x2="898" y2="321.2" stroke="#9c9c9c" stroke-width="1.3"/>
<line x1="0" y1="361.3" x2="898" y2="361.3" stroke="#9c9c9c" stroke-width="1.3"/>
<line x1="0" y1="401.4" x2="898" y2="401.4" stroke="#9c9c9c" stroke-width="1.3"/>
<polyline points="0.1,401.2 30.6,399.9 60.1,391.5 89.8,378.5 179.6,336.6 215.0,320.3 269.5,295.4 299.8,280.9 328.4,264.9 358.8,250.0 389.5,238.1 426.4,222.6 448.6,212.0 481.1,200.5 538.3,176.4 568.5,170.0 611.5,152.6 627.9,147.6 658.6,139.1 688.5,128.8 717.6,115.4 748.2,111.0 778.1,102.0 807.3,96.9 838.0,88.3 897.1,77.2" fill="none" stroke="#1a8e8e" stroke-width="1.1"/>
<polyline points="0.1,381.4 30.6,379.9 60.1,371.5 89.8,358.3 179.6,316.6 210.1,302.6 238.7,289.4 269.1,278.8 299.8,268.5 328.4,254.5 358.8,246.3 417.8,222.8 448.6,206.3 481.1,196.2 538.3,173.0 569.3,165.8 601.2,152.6 627.9,142.3 662.9,131.7 688.5,121.1 717.6,112.0 726.2,109.5 757.0,104.4 783.2,96.3 812.3,90.4 841.4,81.4 867.4,77.5 897.1,1.3" fill="none" stroke="#1c1cf4" stroke-width="1.15"/>
<polyline points="0.1,374.6 30.1,372.7 60.1,364.8 90.5,351.5 215.0,293.5 238.7,281.7 269.1,272.0 358.8,238.1 394.5,226.4 418.0,215.0 448.6,200.5 484.6,189.2 538.3,167.5 570.2,156.7 597.5,144.2 627.9,135.1 658.6,125.2 694.5,112.0 717.6,106.5 757.0,97.4 787.5,85.4 807.3,83.5 817.4,82.3 841.4,76.3 866.6,66.9 897.1,1.3" fill="none" stroke="#10ee10" stroke-width="1.15"/>
<polyline points="7.3,367.1 35.8,361.0 64.3,350.0 84.7,340.0 111.2,330.9 135.6,319.9 156.0,311.9 180.5,298.9 211.0,283.8 239.5,271.8 276.2,253.7 329.2,224.5 359.7,210.1 390.3,198.6 418.8,186.4 449.3,172.4 479.9,162.0 508.4,149.2 539.0,136.2 569.5,129.9 598.0,116.9 628.6,106.2 659.2,98.7 687.7,88.8 718.2,75.1 748.8,70.7 777.3,61.7 807.9,56.6 838.4,48.4 866.9,42.8 896.6,0.6" fill="none" stroke="#f02020" stroke-width="1.15"/>
<circle cx="7.3" cy="367.1" r="1.95" fill="#ff5050" stroke="#000" stroke-width="0.9"/>
<circle cx="35.8" cy="361.0" r="1.95" fill="#ff5050" stroke="#000" stroke-width="0.9"/>
<circle cx="64.3" cy="350.0" r="1.95" fill="#ff5050" stroke="#000" stroke-width="0.9"/>
<circle cx="84.7" cy="340.0" r="1.95" fill="#ff5050" stroke="#000" stroke-width="0.9"/>
<circle cx="111.2" cy="330.9" r="1.95" fill="#ff5050" stroke="#000" stroke-width="0.9"/>
<circle cx="135.6" cy="319.9" r="1.95" fill="#ff5050" stroke="#000" stroke-width="0.9"/>
<circle cx="156.0" cy="311.9" r="1.95" fill="#ff5050" stroke="#000" stroke-width="0.9"/>
<circle cx="180.5" cy="298.9" r="1.95" fill="#ff5050" stroke="#000" stroke-width="0.9"/>
<circle cx="211.0" cy="283.8" r="1.95" fill="#ff5050" stroke="#000" stroke-width="0.9"/>
<circle cx="239.5" cy="271.8" r="1.95" fill="#ff5050" stroke="#000" stroke-width="0.9"/>
<circle cx="276.2" cy="253.7" r="1.95" fill="#ff5050" stroke="#000" stroke-width="0.9"/>
<circle cx="329.2" cy="224.5" r="1.95" fill="#ff5050" stroke="#000" stroke-width="0.9"/>
<circle cx="359.7" cy="210.1" r="1.95" fill="#ff5050" stroke="#000" stroke-width="0.9"/>
<circle cx="390.3" cy="198.6" r="1.95" fill="#ff5050" stroke="#000" stroke-width="0.9"/>
<circle cx="418.8" cy="186.4" r="1.95" fill="#ff5050" stroke="#000" stroke-width="0.9"/>
<circle cx="449.3" cy="172.4" r="1.95" fill="#ff5050" stroke="#000" stroke-width="0.9"/>
<circle cx="479.9" cy="162.0" r="1.95" fill="#ff5050" stroke="#000" stroke-width="0.9"/>
<circle cx="508.4" cy="149.2" r="1.95" fill="#ff5050" stroke="#000" stroke-width="0.9"/>
<circle cx="539.0" cy="136.2" r="1.95" fill="#ff5050" stroke="#000" stroke-width="0.9"/>
<circle cx="569.5" cy="129.9" r="1.95" fill="#ff5050" stroke="#000" stroke-width="0.9"/>
<circle cx="598.0" cy="116.9" r="1.95" fill="#ff5050" stroke="#000" stroke-width="0.9"/>
<circle cx="628.6" cy="106.2" r="1.95" fill="#ff5050" stroke="#000" stroke-width="0.9"/>
<circle cx="659.2" cy="98.7" r="1.95" fill="#ff5050" stroke="#000" stroke-width="0.9"/>
<circle cx="687.7" cy="88.8" r="1.95" fill="#ff5050" stroke="#000" stroke-width="0.9"/>
<circle cx="718.2" cy="75.1" r="1.95" fill="#ff5050" stroke="#000" stroke-width="0.9"/>
<circle cx="748.8" cy="70.7" r="1.95" fill="#ff5050" stroke="#000" stroke-width="0.9"/>
<circle cx="777.3" cy="61.7" r="1.95" fill="#ff5050" stroke="#000" stroke-width="0.9"/>
<circle cx="807.9" cy="56.6" r="1.95" fill="#ff5050" stroke="#000" stroke-width="0.9"/>
<circle cx="838.4" cy="48.4" r="1.95" fill="#ff5050" stroke="#000" stroke-width="0.9"/>
<circle cx="866.9" cy="42.8" r="1.95" fill="#ff5050" stroke="#000" stroke-width="0.9"/>
<circle cx="896.6" cy="0.6" r="1.95" fill="#ff5050" stroke="#000" stroke-width="0.9"/>
</svg></div>
<div class="a" style="left:979px;top:173px;width:2px;height:402px;background:#222"></div>
<div class="a" style="left:86px;top:575px;width:895px;height:2px;background:#222"></div>
<div class="a" style="left:71px;top:173px;width:10px;height:1px;background:#fff"></div>
<div class="t" style="right:950.5px;top:165.5px;font-size:11px;color:#fff;letter-spacing:0.2px;transform-origin:100% 0;transform:scaleX(1.15);">10</div>
<div class="a" style="left:71px;top:214px;width:10px;height:1px;background:#fff"></div>
<div class="t" style="right:950.5px;top:206.5px;font-size:11px;color:#fff;letter-spacing:0.2px;transform-origin:100% 0;transform:scaleX(1.15);">9</div>
<div class="a" style="left:71px;top:254px;width:10px;height:1px;background:#fff"></div>
<div class="t" style="right:950.5px;top:246.5px;font-size:11px;color:#fff;letter-spacing:0.2px;transform-origin:100% 0;transform:scaleX(1.15);">8</div>
<div class="a" style="left:71px;top:294px;width:10px;height:1px;background:#fff"></div>
<div class="t" style="right:950.5px;top:286.5px;font-size:11px;color:#fff;letter-spacing:0.2px;transform-origin:100% 0;transform:scaleX(1.15);">7</div>
<div class="a" style="left:71px;top:334px;width:10px;height:1px;background:#fff"></div>
<div class="t" style="right:950.5px;top:326.5px;font-size:11px;color:#fff;letter-spacing:0.2px;transform-origin:100% 0;transform:scaleX(1.15);">6</div>
<div class="a" style="left:71px;top:374px;width:10px;height:1px;background:#fff"></div>
<div class="t" style="right:950.5px;top:366.5px;font-size:11px;color:#fff;letter-spacing:0.2px;transform-origin:100% 0;transform:scaleX(1.15);">5</div>
<div class="a" style="left:71px;top:414px;width:10px;height:1px;background:#fff"></div>
<div class="t" style="right:950.5px;top:406.5px;font-size:11px;color:#fff;letter-spacing:0.2px;transform-origin:100% 0;transform:scaleX(1.15);">4</div>
<div class="a" style="left:71px;top:454px;width:10px;height:1px;background:#fff"></div>
<div class="t" style="right:950.5px;top:446.5px;font-size:11px;color:#fff;letter-spacing:0.2px;transform-origin:100% 0;transform:scaleX(1.15);">3</div>
<div class="a" style="left:71px;top:494px;width:10px;height:1px;background:#fff"></div>
<div class="t" style="right:950.5px;top:486.5px;font-size:11px;color:#fff;letter-spacing:0.2px;transform-origin:100% 0;transform:scaleX(1.15);">2</div>
<div class="a" style="left:71px;top:534px;width:10px;height:1px;background:#fff"></div>
<div class="t" style="right:950.5px;top:526.5px;font-size:11px;color:#fff;letter-spacing:0.2px;transform-origin:100% 0;transform:scaleX(1.15);">1</div>
<div class="a" style="left:71px;top:574px;width:10px;height:1px;background:#fff"></div>
<div class="t" style="right:950.5px;top:566.5px;font-size:11px;color:#fff;letter-spacing:0.2px;transform-origin:100% 0;transform:scaleX(1.15);">0</div>
<div class="a" style="left:81px;top:574px;width:1px;height:11px;background:#fff"></div>
<div class="t" style="left:-69px;width:300px;text-align:center;top:588.5px;font-size:12px;color:#fff;letter-spacing:0.5px;transform-origin:50% 0;transform:scaleX(1.27);">0.0</div>
<div class="a" style="left:171px;top:574px;width:1px;height:11px;background:#fff"></div>
<div class="t" style="left:21px;width:300px;text-align:center;top:588.5px;font-size:12px;color:#fff;letter-spacing:0.5px;transform-origin:50% 0;transform:scaleX(1.27);">0.4</div>
<div class="a" style="left:261px;top:574px;width:1px;height:11px;background:#fff"></div>
<div class="t" style="left:111px;width:300px;text-align:center;top:588.5px;font-size:12px;color:#fff;letter-spacing:0.5px;transform-origin:50% 0;transform:scaleX(1.27);">0.9</div>
<div class="a" style="left:350px;top:574px;width:1px;height:11px;background:#fff"></div>
<div class="t" style="left:200px;width:300px;text-align:center;top:588.5px;font-size:12px;color:#fff;letter-spacing:0.5px;transform-origin:50% 0;transform:scaleX(1.27);">1.3</div>
<div class="a" style="left:440px;top:574px;width:1px;height:11px;background:#fff"></div>
<div class="t" style="left:290px;width:300px;text-align:center;top:588.5px;font-size:12px;color:#fff;letter-spacing:0.5px;transform-origin:50% 0;transform:scaleX(1.27);">1.8</div>
<div class="a" style="left:530px;top:574px;width:1px;height:11px;background:#fff"></div>
<div class="t" style="left:380px;width:300px;text-align:center;top:588.5px;font-size:12px;color:#fff;letter-spacing:0.5px;transform-origin:50% 0;transform:scaleX(1.27);">2.2</div>
<div class="a" style="left:620px;top:574px;width:1px;height:11px;background:#fff"></div>
<div class="t" style="left:470px;width:300px;text-align:center;top:588.5px;font-size:12px;color:#fff;letter-spacing:0.5px;transform-origin:50% 0;transform:scaleX(1.27);">2.6</div>
<div class="a" style="left:709px;top:574px;width:1px;height:11px;background:#fff"></div>
<div class="t" style="left:559px;width:300px;text-align:center;top:588.5px;font-size:12px;color:#fff;letter-spacing:0.5px;transform-origin:50% 0;transform:scaleX(1.27);">3.1</div>
<div class="a" style="left:799px;top:574px;width:1px;height:11px;background:#fff"></div>
<div class="t" style="left:649px;width:300px;text-align:center;top:588.5px;font-size:12px;color:#fff;letter-spacing:0.5px;transform-origin:50% 0;transform:scaleX(1.27);">3.5</div>
<div class="a" style="left:889px;top:574px;width:1px;height:11px;background:#fff"></div>
<div class="t" style="left:739px;width:300px;text-align:center;top:588.5px;font-size:12px;color:#fff;letter-spacing:0.5px;transform-origin:50% 0;transform:scaleX(1.27);">4.0</div>
<div class="a" style="left:978px;top:574px;width:1px;height:11px;background:#fff"></div>
<div class="t" style="left:828px;width:300px;text-align:center;top:588.5px;font-size:12px;color:#fff;letter-spacing:0.5px;transform-origin:50% 0;transform:scaleX(1.27);">4.4</div>
<div class="t" style="left:379.70000000000005px;width:300px;text-align:center;top:602px;font-size:12px;color:#fff;letter-spacing:0.5px;transform-origin:50% 0;transform:scaleX(1.2);">Time From Launch (sec)</div>
<div class="t" style="left:-129px;width:300px;text-align:center;top:384px;font-size:12px;color:#fff;letter-spacing:0.5px;transform-origin:50% 50%;transform:rotate(-90deg) scaleX(1.2)">Driveshaft (rpmx1000)</div>
<div class="a" style="left:10px;top:647px;width:998px;height:181px;border:1px solid #ffd6d6"></div>
<div class="a" style="left:9px;top:646px;width:998px;height:181px;border:1px solid #f00"></div>
<div class="a" style="left:18px;top:645px;width:207px;height:4px;background:#000;"></div>
<div class="t glow" style="left:20.5px;top:638.5px;font-size:16px;color:#fff;letter-spacing:1.6px;transform:scaleX(1.0);-webkit-text-stroke:0.4px #fff">RETARD ABOVE LIMIT</div>
<div class="t " style="left:87px;top:670.5px;font-size:10.8px;color:#fff;letter-spacing:0.3px;transform:scaleX(1.13);">Select Table to Edit</div>
<div class="dd" style="left:213px;top:664px"><svg class="a" style="left:98px;top:7px" width="11" height="8"><path d="M1.5 1.5 L5.3 5.6 L9.1 1.5" fill="none" stroke="#444" stroke-width="1.2"/></svg></div>
<div class="a" style="left:217.60000000000002px;top:667.9px;font-size:12px;line-height:14px;color:#000;white-space:nowrap;transform-origin:0 0;transform:scaleX(0.88)">Retard A</div>
<div class="a" style="left:75px;top:691px;width:911px;height:48px;background:#fff;"></div>
<div class="a" style="left:75px;top:691px;width:910px;height:23px;background:#a0a0a0;"></div>
<div class="a" style="left:76px;top:692px;width:908px;height:22px;background:#696969;"></div>
<div class="a" style="left:77px;top:693px;width:907px;height:21px;background:#e3e3e3;"></div>
<div class="a" style="left:77px;top:693px;width:906px;height:20px;background:#c8c8c8;"></div>
<div class="a" style="left:75px;top:714px;width:911px;height:2px;background:#fff;"></div>
<div class="a" style="left:75px;top:716px;width:909px;height:22px;background:#a0a0a0;"></div>
<div class="a" style="left:76px;top:716px;width:908px;height:21px;background:#8a8a8a;"></div>
<div class="a" style="left:77px;top:717px;width:907px;height:20px;background:#d8d4cc;"></div>
<div class="a" style="left:77px;top:693px;width:906px;height:20px;color:#151515;overflow:hidden">
<div class="cell" style="left:0px;width:28px;line-height:21px;">0.0</div>
<div class="cell" style="left:28px;width:29px;line-height:21px;border-left:1px solid #bebebe">-2.0</div>
<div class="cell" style="left:57px;width:29px;line-height:21px;border-left:1px solid #bebebe">-2.0</div>
<div class="cell" style="left:86px;width:29px;line-height:21px;border-left:1px solid #bebebe">-2.0</div>
<div class="cell" style="left:115px;width:30px;line-height:21px;border-left:1px solid #bebebe">-2.0</div>
<div class="cell" style="left:145px;width:29px;line-height:21px;border-left:1px solid #bebebe">-2.0</div>
<div class="cell" style="left:174px;width:29px;line-height:21px;border-left:1px solid #bebebe">-2.0</div>
<div class="cell" style="left:203px;width:29px;line-height:21px;border-left:1px solid #bebebe">-2.0</div>
<div class="cell" style="left:232px;width:29px;line-height:21px;border-left:1px solid #bebebe">-2.0</div>
<div class="cell" style="left:261px;width:29px;line-height:21px;border-left:1px solid #bebebe">-2.0</div>
<div class="cell" style="left:290px;width:30px;line-height:21px;border-left:1px solid #bebebe">-2.0</div>
<div class="cell" style="left:320px;width:30px;line-height:21px;border-left:1px solid #bebebe">-2.0</div>
<div class="cell" style="left:350px;width:30px;line-height:21px;border-left:1px solid #bebebe">-2.0</div>
<div class="cell" style="left:380px;width:30px;line-height:21px;border-left:1px solid #bebebe">-2.0</div>
<div class="cell" style="left:410px;width:30px;line-height:21px;border-left:1px solid #bebebe">-2.0</div>
<div class="cell" style="left:440px;width:30px;line-height:21px;border-left:1px solid #bebebe">-2.0</div>
<div class="cell" style="left:470px;width:29px;line-height:21px;border-left:1px solid #bebebe">-2.0</div>
<div class="cell" style="left:499px;width:30px;line-height:21px;border-left:1px solid #bebebe">-1.0</div>
<div class="cell" style="left:529px;width:29px;line-height:21px;border-left:1px solid #bebebe">-1.0</div>
<div class="cell" style="left:558px;width:29px;line-height:21px;border-left:1px solid #bebebe">-1.0</div>
<div class="cell" style="left:587px;width:29px;line-height:21px;border-left:1px solid #bebebe">-1.0</div>
<div class="cell" style="left:616px;width:29px;line-height:21px;border-left:1px solid #bebebe">-1.0</div>
<div class="cell" style="left:645px;width:29px;line-height:21px;border-left:1px solid #bebebe">-1.0</div>
<div class="cell" style="left:674px;width:29px;line-height:21px;border-left:1px solid #bebebe">-1.0</div>
<div class="cell" style="left:703px;width:29px;line-height:21px;border-left:1px solid #bebebe">-1.0</div>
<div class="cell" style="left:732px;width:29px;line-height:21px;border-left:1px solid #bebebe">-1.0</div>
<div class="cell" style="left:761px;width:29px;line-height:21px;border-left:1px solid #bebebe">-1.0</div>
<div class="cell" style="left:790px;width:29px;line-height:21px;border-left:1px solid #bebebe">-1.0</div>
<div class="cell" style="left:819px;width:29px;line-height:21px;border-left:1px solid #bebebe">-1.0</div>
<div class="cell" style="left:848px;width:29px;line-height:21px;border-left:1px solid #bebebe">-1.0</div>
<div class="cell" style="left:877px;width:29px;line-height:21px;border-left:1px solid #bebebe">-1.0</div>
</div>
<div class="a" style="left:77px;top:717px;width:906px;height:19px;background:#2a80f2;color:#f6f63a;overflow:hidden">
<div class="cell" style="left:0px;width:28px;line-height:20px;">0.00</div>
<div class="cell" style="left:28px;width:29px;line-height:20px;border-left:1px solid #d4d4d4">0.15</div>
<div class="cell" style="left:57px;width:29px;line-height:20px;border-left:1px solid #d4d4d4">0.29</div>
<div class="cell" style="left:86px;width:29px;line-height:20px;border-left:1px solid #d4d4d4">0.44</div>
<div class="cell" style="left:115px;width:30px;line-height:20px;border-left:1px solid #d4d4d4">0.59</div>
<div class="cell" style="left:145px;width:29px;line-height:20px;border-left:1px solid #d4d4d4">0.73</div>
<div class="cell" style="left:174px;width:29px;line-height:20px;border-left:1px solid #d4d4d4">0.88</div>
<div class="cell" style="left:203px;width:29px;line-height:20px;border-left:1px solid #d4d4d4">1.03</div>
<div class="cell" style="left:232px;width:29px;line-height:20px;border-left:1px solid #d4d4d4">1.17</div>
<div class="cell" style="left:261px;width:29px;line-height:20px;border-left:1px solid #d4d4d4">1.32</div>
<div class="cell" style="left:290px;width:30px;line-height:20px;border-left:1px solid #d4d4d4">1.47</div>
<div class="cell" style="left:320px;width:30px;line-height:20px;border-left:1px solid #d4d4d4">1.61</div>
<div class="cell" style="left:350px;width:30px;line-height:20px;border-left:1px solid #d4d4d4">1.76</div>
<div class="cell" style="left:380px;width:30px;line-height:20px;border-left:1px solid #d4d4d4">1.91</div>
<div class="cell" style="left:410px;width:30px;line-height:20px;border-left:1px solid #d4d4d4">2.05</div>
<div class="cell" style="left:440px;width:30px;line-height:20px;border-left:1px solid #d4d4d4">2.20</div>
<div class="cell" style="left:470px;width:29px;line-height:20px;border-left:1px solid #d4d4d4">2.35</div>
<div class="cell" style="left:499px;width:30px;line-height:20px;border-left:1px solid #d4d4d4">2.49</div>
<div class="cell" style="left:529px;width:29px;line-height:20px;border-left:1px solid #d4d4d4">2.64</div>
<div class="cell" style="left:558px;width:29px;line-height:20px;border-left:1px solid #d4d4d4">2.79</div>
<div class="cell" style="left:587px;width:29px;line-height:20px;border-left:1px solid #d4d4d4">2.93</div>
<div class="cell" style="left:616px;width:29px;line-height:20px;border-left:1px solid #d4d4d4">3.08</div>
<div class="cell" style="left:645px;width:29px;line-height:20px;border-left:1px solid #d4d4d4">3.23</div>
<div class="cell" style="left:674px;width:29px;line-height:20px;border-left:1px solid #d4d4d4">3.37</div>
<div class="cell" style="left:703px;width:29px;line-height:20px;border-left:1px solid #d4d4d4">3.52</div>
<div class="cell" style="left:732px;width:29px;line-height:20px;border-left:1px solid #d4d4d4">3.67</div>
<div class="cell" style="left:761px;width:29px;line-height:20px;border-left:1px solid #d4d4d4">3.81</div>
<div class="cell" style="left:790px;width:29px;line-height:20px;border-left:1px solid #d4d4d4">3.96</div>
<div class="cell" style="left:819px;width:29px;line-height:20px;border-left:1px solid #d4d4d4">4.11</div>
<div class="cell" style="left:848px;width:29px;line-height:20px;border-left:1px solid #d4d4d4">4.25</div>
<div class="cell" style="left:877px;width:29px;line-height:20px;border-left:1px solid #d4d4d4">4.40</div>
</div>
<div class="t" style="right:956px;top:696px;font-size:10.8px;color:#00f;letter-spacing:0.3px;transform-origin:100% 0;transform:scaleX(1.13)">Timing</div>
<div class="t" style="right:956px;top:720px;font-size:10.8px;color:#fff;letter-spacing:0.3px;transform-origin:100% 0;transform:scaleX(1.13)">Time</div>
<div class="a" style="left:63px;top:742px;width:4px;height:2px;background:#ddd;border-radius:1px"></div>
</div>
<div class="a" style="left:1264px;top:74px;width:1px;height:744px;background:#fff;"></div>
<div class="a" style="left:1265px;top:74px;width:16px;height:744px;background:#f0f0f0;"></div>
<div class="a" style="left:1265px;top:91px;width:15px;height:429px;background:#cdcdcd;"></div>
<svg class="a" style="left:1264px;top:74px" width="17" height="17"><path d="M5.2 10.7 L8.5 6.7 L11.8 10.7" fill="none" stroke="#505050" stroke-width="2"/></svg>
<svg class="a" style="left:1264px;top:801px" width="17" height="17"><path d="M5.2 6.2 L8.5 10.2 L11.8 6.2" fill="none" stroke="#505050" stroke-width="2"/></svg>
<div class="a" style="left:241px;top:818px;width:1023px;height:1px;background:#fff;"></div>
<div class="a" style="left:1264px;top:818px;width:17px;height:14px;background:#f0f0f0;"></div>
<div class="a" style="left:241px;top:819px;width:1040px;height:13px;background:#f0f0f0;"></div>
<div class="a" style="left:258px;top:819px;width:975px;height:13px;background:#cdcdcd;"></div>
<svg class="a" style="left:241px;top:818px" width="17" height="17"><path d="M10.7 5 L6.9 8.5 L10.7 12" fill="none" stroke="#505050" stroke-width="2"/></svg>
<svg class="a" style="left:1247px;top:818px" width="17" height="17"><path d="M7.2 5 L11 8.5 L7.2 12" fill="none" stroke="#505050" stroke-width="2"/></svg>
<div class="a" style="left:0px;top:0px;width:1285px;height:1px;background:#000;"></div>
<div class="a" style="left:1px;top:1px;width:1283px;height:1px;background:#fff;"></div>
<div class="a" style="left:0px;top:0px;width:1px;height:834px;background:#000;"></div>
<div class="a" style="left:1px;top:1px;width:1px;height:833px;background:#2b90e4;"></div>
<div class="a" style="left:2px;top:2px;width:1px;height:72px;background:#fff;"></div>
<div class="a" style="left:1281px;top:2px;width:2px;height:831px;background:#fff;"></div>
<div class="a" style="left:1283px;top:1px;width:1px;height:833px;background:#2b90e4;"></div>
<div class="a" style="left:1284px;top:0px;width:1px;height:834px;background:#000;"></div>
<div class="a" style="left:234px;top:832px;width:1049px;height:1px;background:#fff;"></div>
<div class="a" style="left:0px;top:833px;width:1285px;height:1px;background:#000;"></div>
</body></html>
